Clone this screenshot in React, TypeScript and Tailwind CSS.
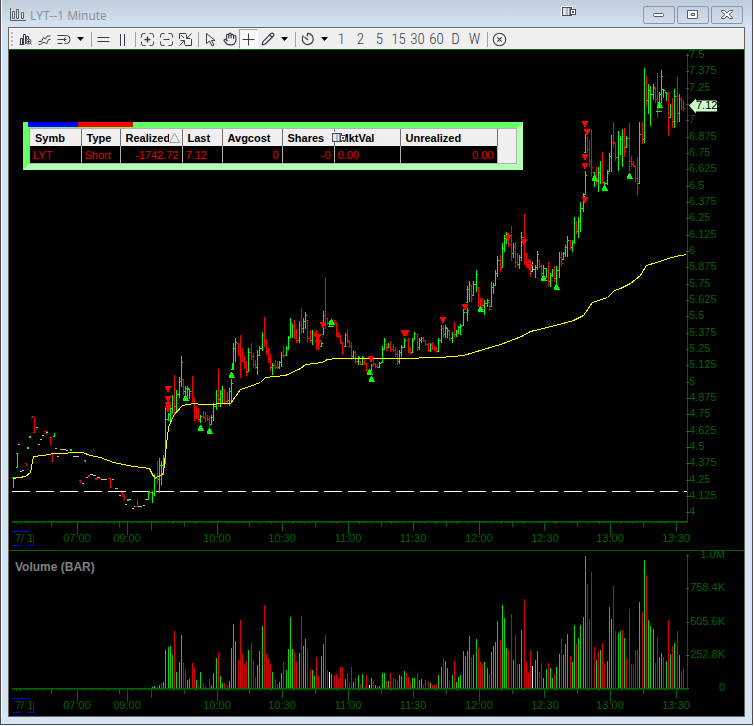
import type { ReactNode } from "react";
import { CircleX, Hand, Pencil } from "lucide-react";

const GREEN = "#00ff00";
const RED = "#ff0000";
const AXIS = "#006400";

// x, high, low, direction
const priceBars = `
13 477 488 g|17 453 468 g|26 463 466 r|34 418 432 r|50 437 445 r|52 454 461 r|54 433 436 g|80 480 483 r|85 460 462 g|110 478 487 r|122 492 497 r|124 495 499 r|137 499 506 r
148 491 500 g|152 491 503 g|154 474 496 g|157 461 484 r|159 458 493 g|161 461 485 g|163 455 475 g|165 408 464 g|168 413 421 g|170 405 421 g|172 395 414 g|174 375 414 r|176 390 413 g
179 377 398 g|181 356 387 g|183 379 395 r|185 386 397 g|187 386 397 g|189 389 399 g|192 376 402 r|194 398 421 r|196 406 419 r|198 408 422 r|200 415 423 g|203 411 419 r|205 412 422 r
207 415 421 r|209 416 427 r|211 415 425 g|213 403 421 g|216 390 410 g|218 369 407 r|220 390 407 g|222 386 404 g|224 389 405 r|227 392 403 r|229 388 406 g|231 379 403 g|232 363 370 g
233 343 370 g|235 338 362 g|238 343 356 r|240 335 378 r|242 348 362 r|244 356 369 r|246 361 376 r|248 348 372 g|251 343 360 r|253 353 368 r|255 360 369 r|257 350 375 g|259 346 356 g
262 332 351 g|264 317 347 r|266 339 355 r|268 348 363 r|270 354 371 r|272 363 375 g|275 360 369 r|277 361 369 r|279 361 369 g|281 352 367 g|283 346 358 r|286 346 356 g|288 336 350 g
290 318 338 g|292 324 338 g|294 320 339 r|296 329 343 r|299 321 343 g|301 308 334 r|303 318 333 g|305 312 329 g|307 320 343 r|310 330 343 r|312 330 345 g|314 332 337 r|316 330 350 r
318 344 350 r|321 342 347 g|323 311 335 g|325 278 329 r|327 318 325 r|329 321 327 g|334 320 325 r|336 322 337 r|338 332 338 r|340 335 344 r|342 342 355 r|345 333 347 g|347 330 343 r
349 341 348 r|351 342 360 r|353 351 359 g|355 351 364 r|358 356 365 g|360 361 365 r|362 356 365 g|364 358 365 r|366 363 372 r|371 364 371 g|373 357 367 r|375 363 368 r|377 364 368 r
379 362 368 g|382 346 363 g|384 338 350 g|386 344 351 r|388 343 348 g|390 341 352 r|393 344 352 r|395 347 357 r|397 350 365 r|399 350 364 g|401 345 357 g|404 338 348 g|408 338 353 r
410 347 355 r|412 338 353 g|414 332 340 g|417 334 351 r|419 338 350 g|421 337 343 g|423 337 342 r|425 340 346 r|428 343 352 r|430 343 352 g|432 342 350 r|434 346 351 r|436 347 353 r
438 338 352 g|441 325 343 g|443 325 337 r|445 325 338 g|447 328 338 g|449 331 341 r|452 332 343 g|454 322 338 r|456 330 337 g|458 326 334 g|460 324 335 g|463 309 326 g|467 308 321 g
467 286 303 g|469 281 302 g|471 285 302 r|473 281 296 g|476 270 292 g|478 287 307 r|480 298 306 r|482 298 308 r|484 300 315 g|487 299 307 g|489 302 311 r|491 282 307 g|493 283 294 g
495 270 286 g|497 256 277 g|500 255 272 r|502 243 268 g|504 235 252 g|506 232 244 g|508 233 247 r|511 226 261 r|513 243 258 g|515 242 268 r|517 253 267 r|519 255 269 g|521 232 261 g
524 214 265 r|526 253 268 r|528 259 263 r|530 260 277 r|532 262 272 w|535 265 278 g|537 251 270 g|539 260 268 r|541 264 276 r|543 265 280 g|546 268 278 g|548 262 286 r|550 273 287 g
552 269 277 g|554 266 282 r|556 266 286 g|559 252 278 g|561 252 266 r|563 252 260 g|565 245 257 g|567 236 257 g|570 240 250 r|572 240 252 g|574 217 244 g|576 221 234 r|578 217 238 g
580 202 232 g|583 193 212 g|585 171 195 g|585 134 153 g|587 137 153 r|589 140 167 r|591 129 177 r|594 172 187 g|596 167 185 r|598 167 192 g|600 161 184 g|602 152 184 r|604 182 190 g
607 170 185 g|609 153 172 g|611 135 172 g|613 122 148 r|615 143 161 r|618 131 171 g|620 136 155 g|622 129 167 g|624 128 157 r|626 136 148 g|629 123 171 r|631 156 167 r|633 161 167 r
635 166 182 r|637 157 195 r|639 122 184 g|642 122 144 r|644 68 143 g|646 76 107 r|648 84 114 g|650 86 126 g|653 84 100 g|655 88 103 r|657 73 118 r|659 92 103 g|661 70 103 g
663 89 98 g|666 92 101 g|668 92 136 r|670 104 118 g|672 98 128 r|674 89 128 g|677 77 123 r|679 94 122 g|681 97 110 r|683 100 111 r`;

// x, height, colour
const volumeBars = `
152 1 g|154 2 g|157 1 r|159 3 g|161 5 r|163 6 g|165 38 g|168 41 g|170 42 g|172 33 g|174 57 r|176 16 g|179 26 g|181 53 g|183 25 r|185 19 r|187 8 g|189 9 g|192 25 r|194 21 r|196 8 g|198 3 r
200 16 g|203 5 r|205 2 r|209 9 r|211 3 g|213 15 g|216 30 g|218 36 r|220 12 g|222 5 g|224 5 r|227 3 r|229 7 g|231 40 g|233 64 g|235 47 g|238 28 r|240 68 r|242 35 r|244 24 r|246 27 r|248 38 g
251 45 r|253 27 r|255 11 r|257 23 g|259 37 g|262 62 g|264 83 r|266 34 r|268 30 r|270 24 r|272 16 g|275 9 r|277 4 r|279 6 g|281 15 g|283 26 r|286 18 g|288 39 g|290 71 g|292 39 g|294 36 r
296 26 r|299 35 g|301 72 r|303 42 g|305 49 g|307 39 r|310 19 r|312 18 g|314 12 g|316 31 r|318 12 r|321 32 g|323 44 g|325 53 r|327 18 r|329 16 w|331 14 g|334 13 r|336 14 r|338 10 r|340 21 r
342 21 r|345 9 g|347 15 r|349 6 r|351 21 r|353 6 g|355 10 r|358 13 g|360 4 r|362 14 g|364 1 r|366 13 r|369 3 w|371 10 g|373 7 r|375 3 g|377 2 r|379 2 g|382 15 g|384 15 g|386 7 r|388 7 g
390 15 r|393 10 r|395 9 r|397 7 r|399 13 g|401 12 g|404 17 g|406 15 r|408 11 r|410 5 r|412 10 g|414 10 g|417 15 r|419 8 g|421 9 g|423 3 r|425 8 r|428 7 r|430 5 g|432 3 r|434 3 r|436 4 r
438 13 g|441 21 g|443 30 r|445 27 g|447 20 g|449 7 r|452 13 g|454 27 r|456 6 g|458 11 g|460 13 g|463 37 g|465 32 g|467 37 g|469 52 g|471 31 r|473 33 g|476 49 g|478 41 r|480 26 r|482 24 r
484 26 g|487 20 g|489 14 r|491 36 g|493 42 g|495 46 g|497 67 g|500 48 r|502 83 g|504 70 g|506 40 g|508 38 r|511 74 r|513 28 g|515 53 r|517 24 r|519 24 g|521 58 g|524 89 r|526 26 r|528 15 r
530 38 r|532 22 w|535 28 g|537 37 g|539 16 r|541 25 r|543 10 g|546 19 g|548 25 r|550 20 g|552 10 g|554 14 r|556 21 g|559 34 g|561 49 r|563 33 g|565 44 g|567 54 g|570 32 r|572 26 g|574 63 g
576 44 r|578 50 g|580 63 g|583 71 g|585 132 g|587 104 r|589 69 r|591 116 r|594 41 r|596 28 g|598 37 r|600 38 g|602 45 r|604 25 r|607 27 g|609 81 g|611 69 g|613 102 r|615 57 r|618 55 g
620 57 g|622 58 r|624 50 g|626 30 r|629 79 r|631 24 r|633 23 r|635 38 r|637 38 r|639 86 g|642 76 r|644 128 g|646 113 r|648 68 g|650 62 g|653 59 g|655 25 r|657 51 r|659 31 g|661 35 g
663 31 r|666 27 g|668 68 r|670 34 g|672 42 r|674 45 g|677 57 r|679 33 g|681 17 r|683 20 r`;

// x, y, width, colour of the thin pre-market prints
const prints = `
12 477 4 g|16 453 2 g|16 467 2 g|18 444 2 w|20 471 2 w|22 470 2 w|25 463 2 r|27 448 2 g|27 447 2 g|29 437 2 g|29 436 2 g|31 417 3 r|32 416 2 r|33 432 2 r|36 427 2 w|38 444 2 w|40 439 2 w
42 435 2 w|44 431 4 r|45 433 2 r|46 432 2 w|49 437 2 r|51 461 2 r|53 436 2 g|55 448 2 w|57 456 2 w|60 449 6 w|66 450 2 w|70 450 2 g|70 449 2 g|73 456 6 w|79 480 2 r|82 483 2 w|84 460 2 g
86 477 2 w|88 475 2 r|88 476 2 r|90 474 3 w|93 475 3 w|95 479 2 r|95 478 2 r|97 477 3 w|99 478 2 r|101 479 6 w|108 478 3 r|109 487 2 r|112 479 2 w|115 488 3 w|119 495 2 w|121 492 2 r
123 499 2 r|125 504 2 w|127 500 2 g|127 499 2 g|129 499 2 w|132 508 2 w|134 506 2 w|135 506 3 r|138 506 4 w|143 505 2 w|145 499 2 w|149 492 2 r|149 493 2 r`;

const sells: [number, number][] = [
  [168, 386], [168, 396], [168, 402], [168, 406], [318, 334], [318, 340], [323, 322], [371, 356], [406, 330], [404, 330],
  [443, 317], [465, 304], [508, 235], [524, 239], [530, 264], [585, 121], [587, 129], [585, 154], [585, 163], [585, 197],
];

const buys: [number, number][] = [
  [185, 395], [200, 425], [209, 428], [231, 372], [331, 319], [369, 369], [371, 376], [480, 306],
  [543, 275], [556, 284], [594, 175], [604, 185], [629, 173], [659, 102],
];

const average =
  "13,478 25,476 30,472 33,456 43,455 53,453 82,452 90,455 100,457 113,462 133,466 149,468 153,476 156,477 163,473 165,453 168,427 173,415 182,405 193,403 202,404 230,403 240,389 249,386 260,382 265,377 285,375 300,368 305,364 322,362 327,359 337,358 397,358 440,357 463,355 483,349 500,344 521,336 530,331 555,325 573,320 583,315 592,302 607,297 614,290 620,288 630,283 640,275 646,265 656,262 668,258 675,256 686,254";

const timeLabels = [
  { x: 77, text: "07:00" },
  { x: 127, text: "09:00" },
  { x: 217, text: "10:00" },
  { x: 282, text: "10:30" },
  { x: 348, text: "11:00" },
  { x: 413, text: "11:30" },
  { x: 479, text: "12:00" },
  { x: 545, text: "12:30" },
  { x: 610, text: "13:00" },
  { x: 676, text: "13:30" },
];

const volumeLabels = ["1.0M", "758.4K", "505.6K", "252.8K", "0"];

const columns = [
  { title: "Symb", value: "LYT", width: "w-[51px]", right: false },
  { title: "Type", value: "Short", width: "w-[39px]", right: false },
  { title: "Realized", value: "-1742.72", width: "w-[62px]", right: true },
  { title: "Last", value: "7.12", width: "w-[40px]", right: false },
  { title: "Avgcost", value: "0", width: "w-[60px]", right: true },
  { title: "Shares", value: "-0", width: "w-[52px]", right: true },
  { title: "MktVal", value: "0.00", width: "w-[66px]", right: false },
  { title: "Unrealized", value: "0.00", width: "w-[97px]", right: true },
];

function parse(data: string) {
  return data
    .trim()
    .split(/[|\n]/)
    .map((row) => {
      const [x, a, b, c] = row.trim().split(" ");
      return { x: Number(x), a: Number(a), b, c };
    });
}

function colour(code: string) {
  if (code === "g") return GREEN;
  return code === "r" ? RED : "#c0c0c0";
}

function PriceBars() {
  let last = 480;
  return (
    <>
      {parse(priceBars).map(({ x, a: high, b, c }, i) => {
        const low = Number(b);
        const pad = Math.floor((low - high) / 5);
        const open = Math.min(Math.max(last, high), low - 1);
        const close = c === "g" ? high + pad : low - 1 - pad;
        last = close;
        return (
          <g key={i} fill={colour(c)}>
            <rect x={x} y={high} width={1} height={low - high} />
            {x > 146 && <rect x={x - 1} y={open} width={1} height={1} />}
            {x > 146 && <rect x={x + 1} y={close} width={1} height={1} />}
          </g>
        );
      })}
    </>
  );
}

function TimeAxis({ y }: { y: number }) {
  const ticks: [number, number][] = [
    [16, 3], [20, 3], [42, 3], [51, 6], [77, 14], [108, 3], [114, 3], [119, 6], [127, 14], [132, 3],
  ];
  for (let i = 0; i <= 48; i++) {
    const size = i % 12 === 6 ? 14 : i % 6 === 0 ? 10 : i % 3 === 0 ? 6 : 3;
    ticks.push([Math.round(151 + i * 10.93), size]);
  }
  return (
    <g>
      <g shapeRendering="crispEdges">
        <rect x={12} y={y} width={675} height={1} fill={AXIS} />
        <line x1={12} x2={687} y1={y + 1.5} y2={y + 1.5} stroke={AXIS} strokeDasharray="1 1" />
        {ticks.map(([x, size]) => (
          <rect key={x} x={x} y={y} width={1} height={size} fill={AXIS} />
        ))}
        <path d={`M12 ${y + 10.5}h18M33.5 ${y + 13}v12M13 ${y + 24.5}h8M27 ${y + 24.5}h7`} stroke="#0000ff" fill="none" />
      </g>
      <text x={15} y={y + 21} fill={AXIS} xmlSpace="preserve">7/ 1</text>
      {timeLabels.map(({ x, text }) => (
        <text key={text} x={x} y={y + 21} fill={AXIS} textAnchor="middle">{text}</text>
      ))}
    </g>
  );
}

function PriceChart() {
  return (
    <svg viewBox="9 50 735 500" className="block w-full overflow-visible font-['Liberation_Sans',Arial,sans-serif] text-[11px]" role="img" aria-label="LYT price">
      <g shapeRendering="crispEdges">
        <line x1={12} x2={687} y1={491.5} y2={491.5} stroke="#fff" strokeDasharray="18 6" />
        <PriceBars />
        {parse(prints).map(({ x, a, b, c }, i) => (
          <rect key={i} x={x} y={a} width={Number(b)} height={1} fill={colour(c)} />
        ))}
        <polyline points={average} transform="translate(0.5 0.5)" fill="none" stroke="#ffff00" />
        {sells.map(([x, y]) => (
          <path key={`${x}-${y}`} d={`M${x - 3} ${y}h6v2h-1v2h-1v2h-2v-2h-1v-2h-1z`} fill={RED} />
        ))}
        {buys.map(([x, y]) => (
          <path key={`${x}-${y}`} d={`M${x - 1} ${y}h2v1h1v2h1v2h1v1h-6v-1h0v-2h1v-2h1z`} fill={GREEN} />
        ))}
        <path d="M328 326.5h6M656 111.5h6" stroke={GREEN} />
        <rect x={687} y={53} width={1} height={469} fill={AXIS} />
      </g>
      {Array.from({ length: 29 }, (_, i) => {
        const y = Math.round(55 + i * 16.33);
        // the 7.125 step sits under the last price tag
        return (
          <g key={i}>
            <rect x={686} y={y} width={3} height={1} fill="#505050" />
            {i !== 3 && <text x={689} y={y + 3} fill={AXIS}>{7.5 - i * 0.125}</text>}
          </g>
        );
      })}
      <path d="M689 105.5l7-7v2h21v11h-21v2z" fill="#ccffcc" />
      <text x={696} y={109} fill="#000">7.12</text>
      <TimeAxis y={521} />
    </svg>
  );
}

function VolumeChart() {
  return (
    <svg viewBox="9 551 735 165" className="block w-full overflow-visible font-['Liberation_Sans',Arial,sans-serif] text-[11px]" role="img" aria-label="LYT volume">
      <text x={15} y={571} fill="#808080" className="text-[12px] font-bold">Volume (BAR)</text>
      <g shapeRendering="crispEdges">
        {parse(volumeBars).map(({ x, a, b }) => (
          <rect key={x} x={x} y={688 - a} width={1} height={a} fill={b === "g" ? "#00dc00" : b === "r" ? "#dc0000" : "#fff"} />
        ))}
        <rect x={687} y={555} width={1} height={134} fill={AXIS} />
      </g>
      {volumeLabels.map((label, i) => {
        const y = 555 + Math.round(i * 33.25);
        return (
          <g key={label}>
            <rect x={686} y={y} width={3} height={1} fill="#505050" />
            <text x={725} y={y + 3} textAnchor="end" fill={AXIS}>{label}</text>
          </g>
        );
      })}
      <TimeAxis y={688} />
    </svg>
  );
}

function DockIcon() {
  return (
    <svg width="16" height="11" viewBox="0 0 16 11" shapeRendering="crispEdges" aria-hidden="true">
      <rect x="0" y="0" width="12" height="10" fill="#fff" />
      <path d="M1.5 1.5h9v8h-9z" fill="#e4e4ea" stroke="#4a4a55" />
      <path d="M5 2h2v7h-2z" fill="#b0b8c4" />
      <path d="M8 2h2v7h-2z" fill="#8c94a4" />
      <path d="M9.5 3.5h5v5h-5z" fill="#fff" stroke="#4a4a55" />
      <path d="M11 5h2v2h-2z" fill="#4a4a55" />
    </svg>
  );
}

function Tool({ label, active, children }: { label: string; active?: boolean; children: ReactNode }) {
  return (
    <button
      type="button"
      aria-label={label}
      className={`flex h-5 w-[19px] shrink-0 items-center justify-center text-[#3c3c4a] ${active ? "border border-t-[#a0a0a0] border-l-[#a0a0a0] border-r-white border-b-white bg-[#f8f8f8]" : ""}`}
    >
      {children}
    </button>
  );
}

function Glyph({ children }: { children: ReactNode }) {
  return (
    <svg width="15" height="15" viewBox="0 0 15 15" fill="none" stroke="currentColor" className="shrink-0" aria-hidden="true">
      {children}
    </svg>
  );
}

function Caret({ label }: { label: string }) {
  return (
    <button type="button" aria-label={label} className="flex h-5 w-[15px] shrink-0 items-center justify-center">
      <svg width="7" height="4" viewBox="0 0 7 4" aria-hidden="true">
        <path d="M0 0h7L3.5 4z" fill="#000" />
      </svg>
    </button>
  );
}

function Separator() {
  return (
    <div className="flex h-5 w-[6px] shrink-0 items-center justify-center">
      <div className="h-[15px] w-px bg-[#a0a0a0]" />
    </div>
  );
}

function Toolbar() {
  return (
    <div className="flex h-[21px] items-center overflow-hidden border-t border-white bg-[#f0f0f0]">
      <div className="ml-[2px] flex w-[5px] shrink-0 flex-col gap-[2px]">
        {[0, 1, 2, 3].map((i) => (
          <span key={i} className="size-[2px] bg-[#b8b8b8]" />
        ))}
      </div>
      <Tool label="Chart style">
        <Glyph>
          <path d="M2.5 12V6.5h2V12M5.500 12V2.500h2V12M8.500 7V4.500h2V7M1.500 12.500h5" />
          <circle cx="10.500" cy="9.500" r="2.500" />
          <path d="M9 9.500h3M10.500 8v3M12.500 11.500l1 1" />
        </Glyph>
      </Tool>
      <Tool label="Studies">
        <Glyph>
          <path d="M1.500 9.500h3l2-4 2 1.500 1.500-3h3.500M1.500 12.500h2l2.500-2h2l1.500 1.500 2-4.500h2" />
        </Glyph>
      </Tool>
      <Tool label="Templates">
        <Glyph>
          <path d="M1.500 3.500h9a3.500 4 0 0 1 0 8h-2M1.500 7.500h6M1.500 11.500h5M9.500 5.500l-2 2 2 2M7.500 7.500h3" />
        </Glyph>
      </Tool>
      <Caret label="More templates" />
      <Separator />
      <Tool label="Horizontal line">
        <Glyph>
          <path d="M1.500 5.500h12M1.500 9.500h12" />
        </Glyph>
      </Tool>
      <Tool label="Vertical line">
        <Glyph>
          <path d="M5.500 2v12M9.500 2v12" />
        </Glyph>
      </Tool>
      <Separator />
      <Tool label="Zoom in">
        <Glyph>
          <path d="M5.500 1.500h-2a2 2 0 0 0-2 2v2M9.500 1.500h2a2 2 0 0 1 2 2v2M1.500 9.500v2a2 2 0 0 0 2 2h2M13.500 9.500v2a2 2 0 0 1-2 2h-2" />
          <path d="M4.500 7.500h6M7.500 4.500v6" strokeWidth="1.5" />
        </Glyph>
      </Tool>
      <Tool label="Zoom out">
        <Glyph>
          <path d="M5.500 1.500h-2a2 2 0 0 0-2 2v2M9.500 1.500h2a2 2 0 0 1 2 2v2M1.500 9.500v2a2 2 0 0 0 2 2h2M13.500 9.500v2a2 2 0 0 1-2 2h-2" />
          <path d="M4.500 7.500h6" />
        </Glyph>
      </Tool>
      <Tool label="Fit">
        <Glyph>
          <path d="M8 1.500H1.500V7M13.500 7v6.500H7M13.500 1.500L8.500 6.500M8.500 2.500v4h4M1.500 13.500L6 9M2.500 8.500h4v4M3 3l3 3" />
        </Glyph>
      </Tool>
      <Separator />
      <Tool label="Pointer">
        <Glyph>
          <path d="M3.500 1.500v10l3-2.500 2.500 5 2-1-2.500-4.500h3.500z" />
        </Glyph>
      </Tool>
      <Tool label="Pan">
        <Hand size={14} strokeWidth={2} />
      </Tool>
      <Tool label="Crosshair" active>
        <Glyph>
          <path d="M1.500 7.500h12M7.500 1.500v12" />
        </Glyph>
      </Tool>
      <Tool label="Draw">
        <Pencil size={14} strokeWidth={2} />
      </Tool>
      <Caret label="More drawing tools" />
      <Separator />
      <Tool label="Interval">
        <Glyph>
          <path d="M3.500 3.500a5.500 5.500 0 1 0 4-2v3M4.500 5l3.500 3" strokeWidth="1.25" />
        </Glyph>
      </Tool>
      <Caret label="More intervals" />
      {["1", "2", "5", "15", "30", "60", "D", "W"].map((text) => (
        <Tool key={text} label={text}>
          <span className="font-['Liberation_Sans_Narrow','Roboto_Condensed',Roboto,sans-serif] text-[15px] leading-5 font-light">{text}</span>
        </Tool>
      ))}
      <Separator />
      <Tool label="Clear">
        <CircleX size={15} strokeWidth={1.75} />
      </Tool>
    </div>
  );
}

function Positions() {
  return (
    <div className="absolute top-[72px] left-[14px] border-6 border-[#66ff66] border-r-[#b3ffb3] border-b-[#b3ffb3] font-['Liberation_Sans',Arial,sans-serif] text-[11px] leading-4">
      <div className="absolute -top-[6px] -left-px flex h-[5px]">
        <div className="w-[50px] bg-[#0000ff]" />
        <div className="w-[55px] bg-[#ff0000]" />
      </div>
      <div className="flex border border-[#b0b0b0]">
        <table className="w-[467px] table-fixed border-collapse bg-black">
          <thead>
            <tr className="h-[17px] bg-[#f0f0f0] text-left text-black">
              {columns.map(({ title, width }) => (
                <th key={title} className={`${width} overflow-hidden border-r border-[#707070] p-0 pl-[5px] whitespace-nowrap`}>
                  {title === "Realized" ? (
                    <div className="flex">
                      <span className="w-[43px] shrink-0 overflow-hidden">{title}</span>
                      <svg width="11" height="11" viewBox="0 0 11 11" className="mt-[2px] shrink-0" aria-hidden="true">
                        <path d="M5.500 1L10.500 10.500H.5z" fill="#f0f0f0" stroke="#a0a0a0" />
                      </svg>
                    </div>
                  ) : (
                    title
                  )}
                </th>
              ))}
            </tr>
          </thead>
          <tbody>
            <tr className="h-[17px] text-[#e60000]">
              {columns.map(({ title, value, right }) => (
                <td key={title} className={`border-r border-[#b0b0b0] p-0 px-[3px] ${right ? "text-right" : "text-left"}`}>
                  {value}
                </td>
              ))}
            </tr>
          </tbody>
        </table>
        <div className="w-[18px] bg-[#f0f0f0]" />
      </div>
      <div className="absolute top-[4px] left-[302px]">
        <DockIcon />
      </div>
    </div>
  );
}

const controlClass =
  "flex h-[18px] w-8 items-center justify-center rounded-[2px] border border-[#8497b0] bg-linear-to-b from-[#c3d0de] to-[#d3deea]";

export default function App() {
  return (
    <div className="bg-white pr-px pb-px">
      <div className="border-r border-b border-l border-[#4b4b55] bg-[#d7e4f2] pr-[7px] pb-[7px]">
        <div className="border-l border-white">
          <header className="-mr-[7px] flex h-[27px] items-start bg-linear-to-b from-[#bfcddb] to-[#d7e4f2] pr-[9px]">
            <svg width="17" height="14" viewBox="0 0 17 14" fill="none" stroke="#5a6068" className="mt-[8px] ml-[7px]" aria-hidden="true">
              <path d="M1.500 0v12.500H17" />
              <path d="M3.500 10.500V3.500h2v7zM7.500 10.500V1.500h2v9zM12.500 10.500V4.500h2v6z" fill="#e8eef4" />
            </svg>
            <h1 className="mt-[6px] ml-1 flex-1 font-['Open_Sans','Noto_Sans',sans-serif] text-[12px] leading-5 text-[#868d95]">LYT--1 Minute</h1>
            <div className="mt-[6px] mr-[66px]">
              <DockIcon />
            </div>
            <div className="mt-[6px] flex gap-[2px]">
              <button type="button" aria-label="Minimize" className={controlClass}>
                <svg width="12" height="6" viewBox="0 0 12 6" aria-hidden="true">
                  <rect x=".5" y="1.500" width="10" height="3" rx="1" fill="#fff" stroke="#55586a" />
                </svg>
              </button>
              <button type="button" aria-label="Maximize" className={controlClass}>
                <svg width="12" height="10" viewBox="0 0 12 10" aria-hidden="true">
                  <path d="M.5.5h10v8H.5zM4 3.500v2h3.500v-2z" fill="#fff" fillRule="evenodd" stroke="#55586a" />
                </svg>
              </button>
              <button type="button" aria-label="Close" className={controlClass}>
                <svg width="12" height="10" viewBox="0 0 12 10" aria-hidden="true">
                  <path d="M.5.5h3L6 3 8.500.5h3v1L8 4.500l3.500 3v1h-3L6 6 3.500 8.500h-3v-1L4 4.500.5 1.500z" fill="#fff" stroke="#55586a" />
                </svg>
              </button>
            </div>
          </header>
          <main className="ml-[6px] border border-[#646464] bg-black">
            <Toolbar />
            <section className="relative border-t border-b border-[#006400]">
              <PriceChart />
              <Positions />
            </section>
            <VolumeChart />
          </main>
        </div>
      </div>
    </div>
  );
}
